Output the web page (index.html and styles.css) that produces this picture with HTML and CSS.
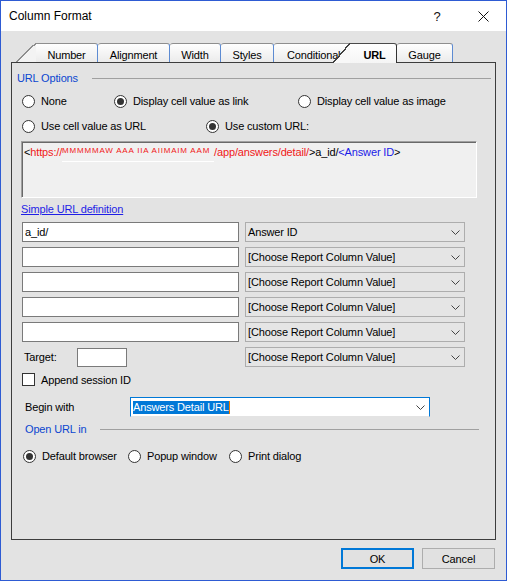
FILE: index.html
```html
<!DOCTYPE html>
<html>
<head>
<meta charset="utf-8">
<title>Column Format</title>
<link rel="stylesheet" href="styles.css">
</head>
<body>
<div class="window">
  <div class="titlebar">
    <div class="title">Column Format</div>
    <div class="tb-btn help">?</div>
    <div class="tb-btn close">
      <svg width="11" height="11" viewBox="0 0 11 11"><path d="M0.5 0.5 L10.5 10.5 M10.5 0.5 L0.5 10.5" stroke="#111" stroke-width="1" fill="none"/></svg>
    </div>
  </div>
  <div class="body">
    <div class="tabs">
      <span class="slant slant-num"></span>
      <div class="tab tab-number">Number</div>
      <div class="tab tab-align">Alignment</div>
      <div class="tab tab-width">Width</div>
      <div class="tab tab-styles">Styles</div>
      <div class="tab tab-cond">Conditional</div>
      <span class="slant slant-url"></span>
      <div class="tab tab-url">URL</div>
      <div class="tab tab-gauge">Gauge</div>
    </div>
    <div class="panel">
      <div class="group-head head-url"><span>URL Options</span><span class="rule"></span></div>
      <div class="radio-row row1">
        <div class="opt w92"><span class="radio"></span>None</div>
        <div class="opt w184"><span class="radio on"></span>Display cell value as link</div>
        <div class="opt"><span class="radio"></span>Display cell value as image</div>
      </div>
      <div class="radio-row row2">
        <div class="opt w184"><span class="radio"></span>Use cell value as URL</div>
        <div class="opt"><span class="radio on"></span>Use custom URL:</div>
      </div>
      <div class="urlbox"><span class="blk">&lt;</span><span class="red">https://</span><span class="redact"><span class="redact-txt">MMMMMAW AAA IIA AIIMAIM AAM</span></span><span class="red">/app/answers/detail/</span><span class="blk">&gt;a_id/</span><span class="blu">&lt;Answer ID</span><span class="blk">&gt;</span></div>
      <div class="link">Simple URL definition</div>
      <div class="fields">
        <div class="input">a_id/</div>
        <div class="combo"><span class="ctext">Answer ID</span><svg class="chev" width="9" height="5" viewBox="0 0 9 5"><path d="M0.5 0.5 L4.5 4.5 L8.5 0.5" fill="none" stroke="#444"/></svg></div>
        <div class="input"></div>
        <div class="combo"><span class="ctext">[Choose Report Column Value]</span><svg class="chev" width="9" height="5" viewBox="0 0 9 5"><path d="M0.5 0.5 L4.5 4.5 L8.5 0.5" fill="none" stroke="#444"/></svg></div>
        <div class="input"></div>
        <div class="combo"><span class="ctext">[Choose Report Column Value]</span><svg class="chev" width="9" height="5" viewBox="0 0 9 5"><path d="M0.5 0.5 L4.5 4.5 L8.5 0.5" fill="none" stroke="#444"/></svg></div>
        <div class="input"></div>
        <div class="combo"><span class="ctext">[Choose Report Column Value]</span><svg class="chev" width="9" height="5" viewBox="0 0 9 5"><path d="M0.5 0.5 L4.5 4.5 L8.5 0.5" fill="none" stroke="#444"/></svg></div>
        <div class="input"></div>
        <div class="combo"><span class="ctext">[Choose Report Column Value]</span><svg class="chev" width="9" height="5" viewBox="0 0 9 5"><path d="M0.5 0.5 L4.5 4.5 L8.5 0.5" fill="none" stroke="#444"/></svg></div>
        <div class="target"><span class="tlabel">Target:</span><span class="input small"></span></div>
        <div class="combo"><span class="ctext">[Choose Report Column Value]</span><svg class="chev" width="9" height="5" viewBox="0 0 9 5"><path d="M0.5 0.5 L4.5 4.5 L8.5 0.5" fill="none" stroke="#444"/></svg></div>
      </div>
      <div class="check-row"><span class="checkbox"></span>Append session ID</div>
      <div class="begin-row">
        <span class="blabel">Begin with</span>
        <div class="combo-edit"><span class="ctext"><span class="sel">Answers Detail URL</span></span><svg class="chev" width="9" height="5" viewBox="0 0 9 5"><path d="M0.5 0.5 L4.5 4.5 L8.5 0.5" fill="none" stroke="#444"/></svg></div>
      </div>
      <div class="group-head head-open"><span>Open URL in</span><span class="rule"></span></div>
      <div class="radio-row row3">
        <div class="opt w105"><span class="radio on"></span>Default browser</div>
        <div class="opt w101"><span class="radio"></span>Popup window</div>
        <div class="opt"><span class="radio"></span>Print dialog</div>
      </div>
    </div>
    <div class="buttons">
      <div class="btn default">OK</div>
      <div class="btn">Cancel</div>
    </div>
  </div>
</div>
</body>
</html>
```
FILE: styles.css
```css
html, body {
  margin: 0;
  padding: 0;
  background: #e3e3e3;
}
body {
  font-family: "Liberation Sans", Arial, sans-serif;
  font-size: 11px;
  letter-spacing: -0.15px;
  color: #000;
}
.window {
  width: 507px;
  height: 581px;
  box-sizing: border-box;
  border: 1px solid #2e5bd3;
  background: #e3e3e3;
  display: flex;
  flex-direction: column;
}
.titlebar {
  height: 30px;
  flex: none;
  background: #fff;
  display: flex;
  align-items: center;
}
.title {
  flex: 1;
  padding-left: 8px;
  font-size: 12px;
  letter-spacing: 0;
}
.tb-btn {
  width: 46px;
  height: 30px;
  display: flex;
  align-items: center;
  justify-content: center;
}
.help {
  font-size: 13px;
  letter-spacing: 0;
  color: #111;
}
.body {
  flex: 1;
  display: flex;
  flex-direction: column;
  padding: 12px 10px 0 10px;
}
/* Tabs */
.tabs {
  display: flex;
  align-items: flex-start;
  height: 20px;
  margin-bottom: -1px;
  padding-left: 5px;
  position: relative;
  z-index: 1;
}
.tab {
  flex: none;
  box-sizing: border-box;
  height: 19px;
  border-top: 1px solid #8e8e8e;
  border-right: 1px solid #5d8bd2;
  border-radius: 3px 3px 0 0;
  background: linear-gradient(#fefefe, #ebebeb);
  text-align: center;
  padding-top: 4px;
  line-height: 14px;
  white-space: nowrap;
  overflow: hidden;
}
.slant {
  flex: none;
  width: 20px;
  height: 19px;
  background: linear-gradient(to top left, #f3f3f3 calc(50% - 0.8px), #8e8e8e calc(50% - 0.8px), #8e8e8e calc(50% + 0.6px), transparent calc(50% + 0.6px));
}
.tab-number { width: 62px; border-top-left-radius: 0; }
.tab-align { width: 72px; }
.tab-width { width: 51px; }
.tab-styles { width: 53px; }
.tab-cond {
  width: 76px;
  border-right: none;
  border-top-right-radius: 0;
  text-align: left;
  padding-left: 13px;
}
.slant-url {
  width: 17px;
  height: 20px;
  margin-left: -17px;
  background: linear-gradient(to top left, #f8f8f8 calc(50% - 0.8px), #404040 calc(50% - 0.8px), #404040 calc(50% + 0.6px), transparent calc(50% + 0.6px));
}
.tab-url {
  width: 47px;
  height: 20px;
  border-top-color: #4a4a4a;
  border-right-color: #333;
  border-top-left-radius: 0;
  background: linear-gradient(#ffffff, #f5f5f5);
  font-weight: bold;
  padding-left: 3px;
}
.tab-gauge { width: 56px; }
/* Panel */
.panel {
  flex: none;
  box-sizing: border-box;
  height: 478px;
  border: 1px solid #3d3d3d;
  display: flex;
  flex-direction: column;
  align-items: flex-start;
}
.group-head {
  align-self: stretch;
  display: flex;
  align-items: center;
  height: 14px;
  color: #0b46d0;
  white-space: nowrap;
}
.group-head .rule {
  flex: 1;
  height: 1px;
  background: #a0a0a0;
}
.head-url { margin: 8px 4px 0 5px; }
.head-url .rule { margin-left: 14px; }
.head-open { margin: 5px 16px 0 13px; }
.head-open .rule { margin-left: 13px; }
.radio-row {
  display: flex;
  align-items: center;
  height: 16px;
  white-space: nowrap;
}
.row1 { margin: 8px 0 0 10px; }
.row2 { margin: 9px 0 0 10px; }
.row3 { margin: 12px 0 0 11px; }
.opt {
  flex: none;
  display: flex;
  align-items: center;
}
.w92 { width: 92px; }
.w184 { width: 184px; }
.w105 { width: 105px; }
.w101 { width: 101px; }
.radio {
  flex: none;
  box-sizing: border-box;
  width: 13px;
  height: 13px;
  border: 1px solid #333;
  border-radius: 50%;
  background: #fff;
  margin-right: 6px;
  display: flex;
  align-items: center;
  justify-content: center;
}
.radio.on::after {
  content: "";
  width: 7px;
  height: 7px;
  border-radius: 50%;
  background: #333;
}
.urlbox {
  margin: 7px 0 0 9px;
  width: 456px;
  height: 57px;
  box-sizing: border-box;
  border-top: 1px solid #a0a0a0;
  border-left: 1px solid #a0a0a0;
  border-right: 1px solid #fff;
  border-bottom: 1px solid #fff;
  box-shadow: inset 1px 1px 0 #696969;
  background: #f0f0f0;
  padding: 3px 0 0 2px;
  line-height: 14px;
  white-space: nowrap;
}
.blk { color: #000; }
.red { color: #f01818; }
.blu { color: #1a1ae8; }
.redact {
  display: inline-block;
  vertical-align: top;
  width: 152px;
  height: 16px;
  border-bottom: 1px solid #fff;
}
.redact-txt {
  display: block;
  line-height: 12px;
  font-size: 8px;
  letter-spacing: 0.8px;
  color: #f01818;
}
.link {
  margin: 4px 0 0 9px;
  line-height: 14px;
  color: #1f1fe6;
  text-decoration: underline;
}
.fields {
  display: grid;
  grid-template-columns: 217px 220px;
  grid-auto-rows: 20px;
  column-gap: 6px;
  row-gap: 5px;
  margin: 6px 0 0 10px;
}
.input {
  box-sizing: border-box;
  border: 1px solid #7a7a7a;
  background: #fff;
  padding-left: 2px;
  line-height: 18px;
}
.combo {
  box-sizing: border-box;
  border: 1px solid #adadad;
  background: #e5e5e5;
  display: flex;
  align-items: center;
  padding: 0 4px 0 2px;
  white-space: nowrap;
}
.ctext { flex: 1; }
.chev { flex: none; }
.target {
  display: flex;
  align-items: center;
}
.tlabel {
  width: 53px;
  margin-left: 2px;
}
.input.small {
  width: 50px;
  height: 19px;
}
.check-row {
  display: flex;
  align-items: center;
  height: 15px;
  margin: 5px 0 0 10px;
  white-space: nowrap;
}
.checkbox {
  box-sizing: border-box;
  width: 13px;
  height: 13px;
  border: 1px solid #333;
  background: #fff;
  margin-right: 6px;
}
.begin-row {
  display: flex;
  align-items: center;
  height: 20px;
  margin: 10px 0 0 13px;
}
.blabel { width: 105px; }
.combo-edit {
  box-sizing: border-box;
  width: 300px;
  height: 20px;
  border: 1px solid #0078d7;
  border-bottom-color: #e3e3e3;
  background: #fff;
  display: flex;
  align-items: center;
  padding: 0 4px 0 2px;
  white-space: nowrap;
}
.sel {
  background: #0078d7;
  color: #fff;
  line-height: 13px;
  display: inline-block;
  border-right: 1px solid #f07a00;
}
.buttons {
  display: flex;
  justify-content: flex-end;
  gap: 8px;
  margin: 8px 1px 0 0;
}
.btn {
  box-sizing: border-box;
  width: 73px;
  height: 21px;
  border: 1px solid #adadad;
  background: #e1e1e1;
  display: flex;
  align-items: center;
  justify-content: center;
}
.btn.default {
  border: 2px solid #0078d7;
}
```
